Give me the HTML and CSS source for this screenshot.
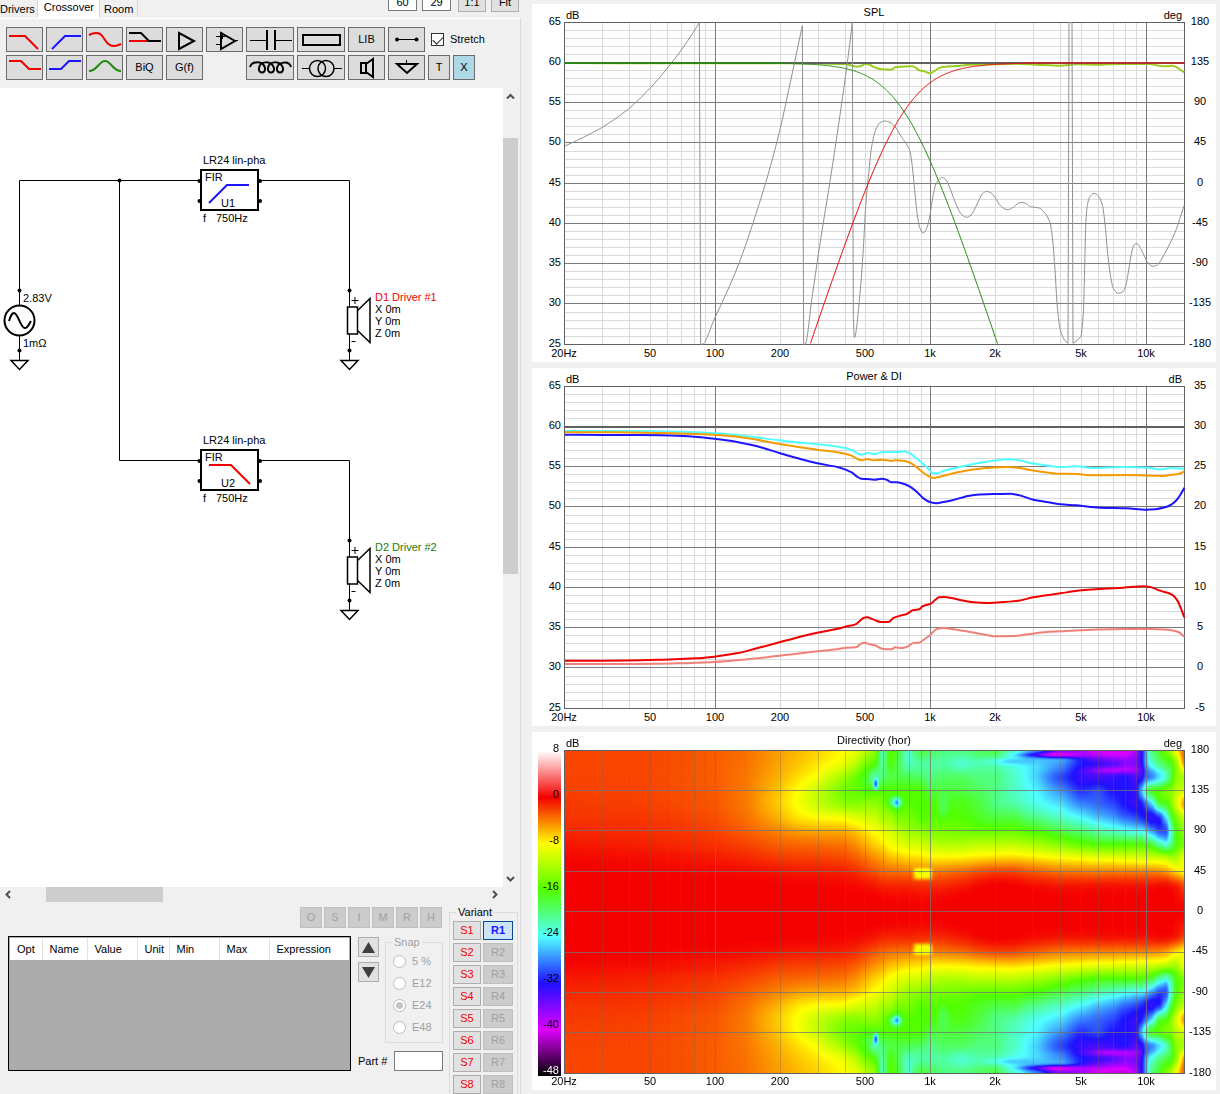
FILE: index.html
```html
<!DOCTYPE html>
<html lang="en">
<head>
<meta charset="utf-8">
<meta name="viewport" content="width=device-width, initial-scale=1">
<title>Crossover</title>
<link rel="stylesheet" href="styles.css">
</head>
<body>
<div class="app">
  <main class="editor">
    <header class="topbar">
      <nav class="tabs">
        <a class="tab" href="#drivers">Drivers</a>
        <a class="tab tab-active" href="#crossover">Crossover</a>
        <a class="tab" href="#room">Room</a>
      </nav>
      <div class="view-tools">
        <input class="view-input" type="text" value="60" aria-label="Grid columns">
        <input class="view-input" type="text" value="29" aria-label="Grid rows">
        <button class="view-button" type="button">1:1</button>
        <button class="view-button" type="button">Fit</button>
      </div>
    </header>

    <div class="page">
      <div class="toolbar">
        <div class="tool-row">
          <button class="tool" type="button" aria-label="Low pass"><svg viewBox="1 1 35 23"><path class="red" d="M3 9H19L32 22"/></svg></button>
          <button class="tool" type="button" aria-label="High pass"><svg viewBox="1 1 35 23"><path class="blue" d="M6 22L19 9H35"/></svg></button>
          <button class="tool" type="button" aria-label="All pass"><svg viewBox="1 1 35 23"><path class="red" d="M3 8C7 6 13 4 17 10C21 16 23 19 28 19C31 19 33 18 35 17"/></svg></button>
          <button class="tool" type="button" aria-label="Shelf"><svg viewBox="1 1 35 23"><path class="red" d="M3 14H22"/><path d="M3 6H15L23 14H35"/></svg></button>
          <button class="tool" type="button" aria-label="Buffer"><svg viewBox="1 1 35 23"><path d="M13 6V22L28 14Z"/></svg></button>
          <button class="tool" type="button" aria-label="Operational amplifier"><svg viewBox="1 1 35 23"><path d="M15 6V22L29 14Z"/><path class="thin" d="M10 9.500H19M16.500 7V12M10 17.500H15M29 13.500H32"/></svg></button>
          <button class="tool tool-wide" type="button" aria-label="Capacitor"><svg viewBox="1 1 46 23"><path class="thin" d="M4 13.500H21M29 13.500H46"/><path d="M21 3V23M29 3V23"/></svg></button>
          <button class="tool tool-wide" type="button" aria-label="Resistor"><svg viewBox="1 1 46 23"><path d="M6 8H43V18H6Z"/></svg></button>
          <button class="tool" type="button">LIB</button>
          <button class="tool" type="button" aria-label="Wire"><svg viewBox="1 1 35 23"><path class="thin" d="M9 12.500H29"/><circle cx="9" cy="12.500" r="2"/><circle cx="28.500" cy="12.500" r="2"/></svg></button>
          <label class="stretch"><input type="checkbox" checked>Stretch</label>
        </div>
        <div class="tool-row">
          <button class="tool" type="button" aria-label="Low shelf"><svg viewBox="1 1 35 23"><path class="red" d="M3 6H15L23 14H35"/></svg></button>
          <button class="tool" type="button" aria-label="High shelf"><svg viewBox="1 1 35 23"><path class="blue" d="M3 14H15L23 6H35"/></svg></button>
          <button class="tool" type="button" aria-label="Peak"><svg viewBox="1 1 35 23"><path class="green" d="M3 16C11 16 13 6 19 6C25 6 27 16 35 16"/></svg></button>
          <button class="tool" type="button">BiQ</button>
          <button class="tool tool-last" type="button">G(f)</button>
          <button class="tool tool-wide" type="button" aria-label="Inductor"><svg viewBox="1 1 46 23"><path d="M4 12C6 6 17 5 19 13C20 19 12 19 13 13C14 6 25 5 28 13C29 19 21 19 22 13C23 6 34 5 37 13C38 19 30 19 31 13C32 7 43 5 45 12"/></svg></button>
          <button class="tool tool-wide" type="button" aria-label="Transformer"><svg viewBox="1 1 46 23"><circle class="ring" cx="20.500" cy="13.500" r="8"/><circle class="ring" cx="29" cy="13.500" r="8"/><path class="thin" d="M5 13.500H13M37 13.500H45"/></svg></button>
          <button class="tool" type="button" aria-label="Driver"><svg viewBox="1 1 35 23"><path d="M13 8H18V18H13ZM18 9L25 4V22L18 17"/></svg></button>
          <button class="tool" type="button" aria-label="Ground"><svg viewBox="1 1 35 23"><path d="M9 9H29L19 18Z"/><path class="thin" d="M18.500 5V9"/></svg></button>
          <button class="tool tool-small" type="button">T</button>
          <button class="tool tool-small tool-x" type="button">X</button>
        </div>
      </div>

      <div class="workspace">
        <svg class="schematic" viewBox="0 88 503 640" role="img" aria-label="Crossover schematic">
          <defs>
            <g id="ground"><path class="part" d="M-8.500 10H8.500L0 19Z"/></g>
            <g id="speaker">
              <path class="wire" d="M0 0V17M0 43V70"/>
              <rect class="part" x="-2" y="16.500" width="10" height="27"/>
              <path class="part" d="M8 20L20.500 8V52L8 40"/>
              <circle class="node" r="2"/><circle class="node" cy="60" r="2"/>
              <path class="wire" d="M2 10H9M5.500 6.500V13.500M2 51H6"/>
              <use href="#ground" y="60"/>
            </g>
            <g id="block">
              <rect class="part" x="1" y="-11" width="57" height="40"/>
              <circle class="node" cx="-.5" r="2"/><circle class="node" cx="-.5" cy="20" r="2"/>
              <circle class="node" cx="60" r="2"/><circle class="node" cx="60" cy="20" r="2"/>
            </g>
          </defs>
          <path class="wire" d="M19.500 290V180.500H200M119.500 180.500V460.500H200M260 180.500H349.500V290M260 460.500H349.500V540M19.500 290V306M19.500 335V360"/>
          <circle class="node" cx="119.500" cy="180.500" r="2"/>
          <circle class="node" cx="19.500" cy="290.500" r="2"/>
          <circle class="node" cx="19.500" cy="350.500" r="2"/>
          <circle class="part" cx="19.500" cy="320.500" r="15"/>
          <path class="part" d="M9 321C11 315 12 313 14 313C18 313 21 329 25 328C28 328 29 324 31 321"/>
          <use href="#ground" x="19.500" y="350.500"/>
          <text x="23" y="302">2.83V</text><text x="23" y="347">1mΩ</text>

          <use href="#block" x="200" y="181"/>
          <path class="part blue" d="M209 203L227 185H249"/>
          <text x="203" y="164">LR24 lin-pha</text><text x="205" y="181">FIR</text><text x="221" y="207">U1</text>
          <text x="203" y="222">f</text><text x="216" y="222">750Hz</text>

          <use href="#block" x="200" y="461"/>
          <path class="part red" d="M209 465H231L250 484"/>
          <text x="203" y="444">LR24 lin-pha</text><text x="205" y="461">FIR</text><text x="221" y="487">U2</text>
          <text x="203" y="502">f</text><text x="216" y="502">750Hz</text>

          <use href="#speaker" x="349.500" y="290.500"/>
          <text class="name-red" x="375" y="301">D1 Driver #1</text>
          <text x="375" y="313">X 0m</text><text x="375" y="325">Y 0m</text><text x="375" y="337">Z 0m</text>
          <use href="#speaker" x="349.500" y="540.500"/>
          <text class="name-green" x="375" y="551">D2 Driver #2</text>
          <text x="375" y="563">X 0m</text><text x="375" y="575">Y 0m</text><text x="375" y="587">Z 0m</text>
        </svg>
        <div class="scroll scroll-v">
          <button type="button" aria-label="Scroll up"><svg viewBox="0 0 9 9"><path d="M1 6.500L4.500 3L8 6.500"/></svg></button>
          <div class="track-v"><div class="thumb"></div></div>
          <button type="button" aria-label="Scroll down"><svg viewBox="0 0 9 9"><path d="M1 3L4.500 6.500L8 3"/></svg></button>
        </div>
      </div>
      <div class="scroll scroll-h">
        <button type="button" aria-label="Scroll left"><svg viewBox="0 0 9 9"><path d="M6 1L2.500 4.500L6 8"/></svg></button>
        <div class="track-h"><div class="thumb"></div></div>
        <button type="button" aria-label="Scroll right"><svg viewBox="0 0 9 9"><path d="M3 1L6.500 4.500L3 8"/></svg></button>
      </div>

      <div class="bottom">
        <section class="params">
          <div class="modes">
            <button type="button" disabled>O</button><button type="button" disabled>S</button><button type="button" disabled>I</button><button type="button" disabled>M</button><button type="button" disabled>R</button><button type="button" disabled>H</button>
          </div>
          <div class="params-row">
            <div class="table-box">
              <table>
                <thead><tr><th class="c-opt">Opt</th><th class="c-name">Name</th><th class="c-num">Value</th><th class="c-opt">Unit</th><th class="c-num">Min</th><th class="c-num">Max</th><th>Expression</th></tr></thead>
              </table>
            </div>
            <div class="side">
              <div class="side-top">
                <div class="moves">
                  <button type="button" aria-label="Move up"><svg viewBox="0 0 13 11"><path d="M6.500 0L13 11H0Z"/></svg></button>
                  <button type="button" aria-label="Move down"><svg viewBox="0 0 13 11"><path d="M0 0H13L6.500 11Z"/></svg></button>
                </div>
                <fieldset class="snap" disabled>
                  <legend>Snap</legend>
                  <label><input type="radio" name="snap">5 %</label>
                  <label><input type="radio" name="snap">E12</label>
                  <label><input type="radio" name="snap" checked>E24</label>
                  <label><input type="radio" name="snap">E48</label>
                </fieldset>
              </div>
              <div class="part-row"><label for="part">Part #</label><input id="part" type="text"></div>
            </div>
          </div>
        </section>
        <fieldset class="variant">
          <legend>Variant</legend>
          <div class="variant-grid">
            <button class="save" type="button">S1</button><button class="recall recall-on" type="button">R1</button>
            <button class="save" type="button">S2</button><button class="recall" type="button" disabled>R2</button>
            <button class="save" type="button">S3</button><button class="recall" type="button" disabled>R3</button>
            <button class="save" type="button">S4</button><button class="recall" type="button" disabled>R4</button>
            <button class="save" type="button">S5</button><button class="recall" type="button" disabled>R5</button>
            <button class="save" type="button">S6</button><button class="recall" type="button" disabled>R6</button>
            <button class="save" type="button">S7</button><button class="recall" type="button" disabled>R7</button>
            <button class="save" type="button">S8</button><button class="recall" type="button" disabled>R8</button>
          </div>
        </fieldset>
      </div>
    </div>
  </main>

  <aside class="charts">
    <svg class="chart" id="spl" viewBox="0 0 684 358" role="img" aria-label="SPL"></svg>
    <svg class="chart" id="power" viewBox="0 0 684 358" role="img" aria-label="Power and DI"></svg>
    <svg class="chart" id="directivity" viewBox="0 0 684 358" role="img" aria-label="Directivity"></svg>
  </aside>
</div>
<script src="charts.js"></script>
</body>
</html>
```

FILE: styles.css
```css
* { box-sizing: border-box; }

body {
  margin: 0;
  background: #f0f0f0;
  color: #000;
  font: 11px/13px "Liberation Sans", Arial, sans-serif;
}

button, input { font: inherit; color: inherit; margin: 0; }
button { display: flex; align-items: center; justify-content: center; padding: 0; }
button svg { display: block; flex: none; }

.app {
  display: grid;
  grid-template-columns: 521px minmax(0, 1fr);
  gap: 11px;
  min-height: 100vh;
  padding-right: 4px;
}

/* editor */
.editor { display: flex; flex-direction: column; }

.topbar { display: flex; justify-content: space-between; height: 18px; }
.tabs { display: flex; }
.tab {
  height: 17px;
  padding: 3px 2px 0 0;
  border-right: 1px solid #d9d9d9;
  color: #000;
  text-decoration: none;
}
.tab + .tab { padding-left: 4px; padding-right: 4px; }
.tabs .tab-active { height: 18px; padding: 1px 5px 0 6px; background: #fff; }

.view-tools { display: flex; gap: 5px; margin: -10px 2px 0 0; }
.view-input { width: 29px; height: 21px; padding: 3px 0 0; border: 1px solid #7a7a7a; background: #fff; text-align: center; }
.view-button { width: 28px; height: 22px; padding-top: 3px; border: 1px solid #adadad; background: #e1e1e1; }
.view-input + .view-button { margin-left: 2px; }

.page {
  flex: 1;
  display: flex;
  flex-direction: column;
  border: solid #d9d9d9;
  border-width: 0 1px 0 0;
  box-shadow: inset 0 1px #fff;
}

.toolbar { display: flex; flex-direction: column; gap: 3px; padding: 9px 6px 8px; }
.tool-row { display: flex; gap: 3px; }
.tool { width: 37px; height: 25px; border: 1px solid #6b6b6b; background: #dcdcdc; }
.tool-wide { width: 48px; }
.tool-small { width: 22px; }
.tool-last { margin-right: 40px; }
.tool-x { background: #add8e6; }
.tool svg { width: 35px; height: 23px; fill: none; stroke: #000; stroke-width: 2; }
.tool-wide svg { width: 46px; }
.tool svg circle { fill: #000; stroke: none; }
.tool svg .ring { fill: none; stroke: #000; stroke-width: 1.500; }
.tool svg .thin { stroke-width: 1; }
.tool svg .red, .schematic .red { stroke: #f00000; }
.tool svg .blue, .schematic .blue { stroke: #1e14ff; }
.tool svg .green { stroke: #1f8a0c; }
.stretch { display: flex; align-items: center; gap: 6px; padding-left: 3px; }

input[type="checkbox"], input[type="radio"] {
  appearance: none;
  width: 13px;
  height: 13px;
  border: 1px solid #333;
  background: #fff;
}
input[type="checkbox"]:checked::before {
  content: "";
  display: block;
  width: 9px;
  height: 5px;
  margin: 2px 0 0 1px;
  border: solid #222;
  border-width: 0 0 1px 1px;
  transform: rotate(-45deg);
}
input[type="radio"] { border-color: #bcbcbc; border-radius: 50%; }
input[type="radio"]:checked { background: radial-gradient(circle, #c4c4c4 3px, #fff 4px); }

.workspace { flex: 1; display: flex; justify-content: space-between; background: #fff; }
.schematic { flex: 0 1 503px; min-width: 0; height: 640px; }
.schematic text { font-size: 11px; }
.wire { fill: none; stroke: #000; stroke-width: 1; }
.part { fill: none; stroke: #000; stroke-width: 2; }
#speaker .part, #ground .part { stroke-width: 1.500; }
.node { fill: #000; }
.schematic .name-red { fill: #f00000; }
.schematic .name-green { fill: #1f7a0c; }

.scroll { display: flex; background: #f0f0f0; }
.scroll button { width: 15px; height: 17px; border: 0; background: none; }
.scroll svg { width: 9px; height: 9px; fill: none; stroke: #505050; stroke-width: 2; }
.scroll-v { flex-direction: column; width: 15px; margin-right: 2px; box-shadow: 2px 0 #f0f0f0; }
.track-v { flex: 1; }
.track-v .thumb { height: 57%; margin-top: 33px; }
.scroll-h { height: 15px; margin-right: 17px; }
.scroll-h button { width: 17px; height: 15px; }
.track-h { flex: 1; }
.track-h .thumb { width: 25%; height: 15px; margin-left: 29px; }
.thumb { background: #cdcdcd; }

/* parameter area */
.bottom { display: flex; padding-right: 2px; }
.params { flex: 1; padding: 5px 6px 0 8px; }
.modes { display: flex; justify-content: flex-end; gap: 2px; padding-right: 1px; }
.modes button { width: 22px; height: 21px; border: 1px solid #bfbfbf; background: #ccc; color: #a0a0a0; }
.params-row { display: flex; gap: 7px; margin-top: 8px; }
.table-box { flex: 1; height: 135px; padding: 1px; border: 1px solid #000; background: #ababab; }
table { width: 100%; border-collapse: collapse; table-layout: fixed; background: #fff; }
th { height: 22px; padding: 0 0 0 7px; border-right: 1px solid #e0e0e0; font-weight: normal; text-align: left; }
th:last-child { border-right: 0; }
.c-opt { width: 32px; }
.c-name { width: 45px; }
.c-num { width: 50px; }

.side { width: 85px; display: flex; flex-direction: column; justify-content: space-between; }
.side-top { display: flex; gap: 6px; }
.moves { display: flex; flex-direction: column; gap: 5px; padding-top: 1px; }
.moves button { width: 21px; height: 20px; border: 1px solid #adadad; background: #e1e1e1; }
.moves svg { width: 13px; height: 11px; fill: #404040; }
fieldset { min-width: 0; margin: 0; border: 1px solid #dcdcdc; }
legend { padding: 0 2px; }
.snap { flex: 1; height: 107px; padding: 6px 6px 0 7px; color: #a0a0a0; }
.snap legend { margin-left: -1px; }
.snap label { display: flex; align-items: center; gap: 6px; height: 13px; margin-bottom: 9px; white-space: nowrap; }
.part-row { display: flex; align-items: center; justify-content: space-between; }
.part-row input { width: 49px; height: 20px; border: 1px solid #7a7a7a; background: #fff; }

.variant { width: 69px; margin-top: 4px; padding: 2px 3px 0; border-bottom: 0; }
.variant legend { margin-left: 3px; }
.variant-grid { display: grid; grid-template-columns: 28px 30px; gap: 3px 2px; }
.variant button { height: 19px; border: 1px solid #adadad; background: #e1e1e1; }
.variant .save { color: #f00000; }
.variant .recall:disabled { border-color: #bfbfbf; background: #ccc; color: #a0a0a0; }
.variant .recall-on { border-color: #0a4a90; background: #cce4f7; color: #1e14ff; font-weight: bold; }

/* charts */
.charts { display: flex; flex-direction: column; gap: 6px; padding-top: 4px; }
.chart { display: block; width: 100%; height: auto; background: #fff; }
.chart text { font-size: 11px; }
.chart canvas { display: block; width: 620px; height: 323px; }
.minor { fill: none; stroke: #dadada; }
.major { fill: none; stroke: #7c7c7c; }
.overlay .minor { stroke: rgba(110, 100, 70, .33); }
.overlay .major { stroke: rgba(115, 115, 115, .75); }
.frame { fill: none; stroke: #606060; }
.ref { fill: none; stroke: #606060; stroke-width: 2; }
.trace { fill: none; stroke-width: 2; stroke-linejoin: round; }
.trace-fine { fill: none; stroke-width: 1; }
.light { fill: #fff; }
```

FILE: charts.js
```js
const NS = 'http://www.w3.org/2000/svg';
const LEFT = 32.5, TOP = 18.5, WIDTH = 620;
const half = v => Math.floor(v) + 0.5;
const freqX = f => LEFT + WIDTH * Math.log(f / 20) / Math.log(750);

function add(parent, tag, attrs, text) {
  const el = document.createElementNS(NS, tag);
  for (const key in attrs) el.setAttribute(key, attrs[key]);
  if (text !== undefined) el.textContent = text;
  parent.append(el);
  return el;
}

function frequencies() {
  const list = [];
  for (const decade of [10, 100, 1000, 10000])
    for (let n = 1; n < 10; n++) {
      const f = n * decade;
      if (f > 20 && f < 15000) list.push(f);
    }
  return list;
}

/* Grid, axis labels and captions shared by the three charts. */
function axes(svg, o) {
  const g = add(svg, 'g', o.overlay ? { class: 'overlay' } : {});
  const bottom = TOP + o.height;
  let minor = '', major = '';
  for (const f of frequencies()) {
    const line = `M${half(freqX(f))} ${TOP}V${bottom}`;
    if (Number.isInteger(Math.log10(f))) major += line; else minor += line;
  }
  const rows = 8 * o.sub;
  for (let i = 1; i < rows; i++) {
    const line = `M${LEFT} ${half(TOP + o.height * i / rows - 0.3)}H${LEFT + WIDTH}`;
    if (i % o.sub) minor += line; else major += line;
  }
  add(g, 'path', { class: 'minor', d: minor });
  add(g, 'path', { class: 'major', d: major });
  add(g, 'rect', { class: 'frame', x: LEFT, y: TOP, width: WIDTH, height: o.height });
  if (!o.overlay) add(g, 'path', { class: 'ref', d: `M${LEFT} 59H${LEFT + WIDTH}` });

  for (let i = 0; i <= 8; i++) {
    const y = Math.round(TOP + o.height * i / 8 + 2);
    if (o.left) add(svg, 'text', { x: 29, y, 'text-anchor': 'end' }, o.left[i]);
    add(svg, 'text', { x: 668, y, 'text-anchor': 'middle' }, o.right[i]);
  }
  const names = { 20: '20Hz', 50: '50', 100: '100', 200: '200', 500: '500', 1000: '1k', 2000: '2k', 5000: '5k', 10000: '10k' };
  for (const f in names)
    add(svg, 'text', { x: Math.floor(freqX(+f)), y: 353, 'text-anchor': 'middle' }, names[f]);
  add(svg, 'text', { x: 342, y: 12, 'text-anchor': 'middle' }, o.title);
  add(svg, 'text', { x: 34, y: 15 }, 'dB');
  add(svg, 'text', { x: 650, y: 15, 'text-anchor': 'end' }, o.unit);
}

/* Samples are stored at three steps per unit; the high band starts at step 1020. */
function samples(low, high, dy) {
  const read = (text, shift) => text.trim().split(/\s+/).map(p => {
    const [x, y] = p.split(',').map(Number);
    return [(x + shift) / 3 - 2, y / 3 - dy];
  });
  return read(low, 0).concat(read(high, 1020));
}

/* Smooth line through the points; phase wraps stay straight with sharp ends. */
function smooth(p) {
  const WRAP = 100, s = [], m = [];
  for (let i = 0; i < p.length - 1; i++) s.push((p[i + 1][1] - p[i][1]) / (p[i + 1][0] - p[i][0] || 0.01));
  for (let i = 0; i < p.length; i++) {
    const a = s[i - 1], b = s[i];
    if (a === undefined || Math.abs(a) > WRAP) m.push(b);
    else if (b === undefined || Math.abs(b) > WRAP) m.push(a);
    else m.push(a * b <= 0 ? 0 : 2 * a * b / (a + b));
  }
  let d = `M${p[0][0]} ${p[0][1]}`;
  for (let i = 0; i < p.length - 1; i++) {
    const [x0, y0] = p[i], [x1, y1] = p[i + 1], h = (x1 - x0) / 3;
    if (Math.abs(s[i]) > WRAP || h === 0) d += `L${x1} ${y1}`;
    else d += `C${x0 + h} ${y0 + h * m[i]} ${x1 - h} ${y1 - h * m[i + 1]} ${x1} ${y1}`;
  }
  return d;
}

function filterPath(highPass) {
  let d = '';
  for (let x = 0; x <= WIDTH; x++) {
    const r4 = (20 * Math.pow(750, x / WIDTH) / 750) ** 4;
    const loss = 20 * Math.log10(highPass ? (1 + r4) / r4 : 1 + r4);
    const y = 59 + loss * 8.05;
    if (y > TOP + 322) continue;
    d += `${d ? 'L' : 'M'}${LEFT + x} ${y.toFixed(2)}`;
  }
  return d;
}

const spl = document.getElementById('spl');
axes(spl, { title: 'SPL', unit: 'deg', height: 322, sub: 5,
  left: [65, 60, 55, 50, 45, 40, 35, 30, 25], right: [180, 135, 90, 45, 0, -45, -90, -135, -180] });
add(spl, 'path', { class: 'trace', stroke: '#9acd1e', d: smooth(samples(
  '105,189 590,190 800,190 900,191 950,193 968,198 980,200 993,198 1005,192',
  '-5,193 16,203 38,208 65,209 75,202 128,199 140,205 147,211 160,213 180,220 195,212 210,203 225,200 260,198 300,194 375,193 430,191 500,194 570,197 620,193 690,194 750,192 840,192 865,197 885,199 905,197 920,202 932,210 943,217', 4)) });
add(spl, 'path', { class: 'ref', d: `M${LEFT} 59H${LEFT + WIDTH}` });
add(spl, 'path', { class: 'trace-fine', stroke: '#909090', d: smooth(samples(
  '105,438 160,412 215,383 295,327 358,267 410,207 454,150 490,97 508,68 512,1033 516,1033 553,957 592,873 627,790 668,672 708,545 748,397 785,228 817,77 821,1033 825,1033 846,893 867,750 905,512 938,290 955,165 967,68 970,950 973,1013 990,880 1000,745 1007,620 1015,530',
  '5,440 17,390 30,368 45,363 60,367 75,380 95,412 110,433 120,455 127,500 135,580 142,645 150,685 160,699 170,685 178,655 187,600 197,555 208,538 217,532 228,540 240,565 255,605 272,640 290,652 303,645 320,615 337,582 350,574 362,578 375,592 392,618 412,629 430,622 445,610 457,607 468,611 482,620 508,624 525,640 540,668 548,720 555,810 562,920 571,990 585,1022 594,1030 597,68 606,68 609,1030 632,1010 640,940 644,800 648,660 653,610 660,590 672,580 685,588 697,615 706,680 713,760 722,830 730,865 745,880 758,876 768,855 776,810 785,757 792,735 799,730 808,738 820,762 835,790 850,799 862,795 880,768 900,730 920,685 933,645 943,615', 4)) });
add(spl, 'path', { class: 'trace', stroke: '#3f7f2c', d: 'M32.500 59H250' });
add(spl, 'path', { class: 'trace-fine', stroke: '#1f8a0c', d: filterPath(false) });
add(spl, 'path', { class: 'trace-fine', stroke: '#f00000', d: filterPath(true) });
add(spl, 'path', { class: 'trace', stroke: '#b03030', d: 'M490 59H652.500' });

const power = document.getElementById('power');
axes(power, { title: 'Power & DI', unit: 'dB', height: 322, sub: 5,
  left: [65, 60, 55, 50, 45, 40, 35, 30, 25], right: [35, 30, 25, 20, 15, 10, 5, 0, -5] });
const powerTraces = [
  ['#50ffff', '105,198 300,198 450,200 560,205 640,212 748,226 800,232 862,238 930,246 965,255 980,264 993,269 1012,264',
    '15,267 35,262 65,261 85,261 100,259 115,263 135,276 155,293 175,311 187,324 200,325 220,318 260,308 310,297 370,287 415,283 445,285 480,294 520,300 570,306 620,304 670,309 760,306 835,308 870,313 905,309 943,311'],
  ['#1e14ff', '105,209 215,210 330,210 460,213 553,221 600,227 655,238 700,249 748,264 800,279 862,295 930,308 965,322 980,334 993,341 1010,342',
    '13,344 35,341 50,344 65,352 78,352 100,356 120,365 140,380 160,400 180,411 198,415 215,412 250,405 285,395 320,389 375,387 420,386 445,390 490,404 530,411 571,418 620,421 690,428 770,430 829,434 855,433 885,427 905,418 920,405 932,388 943,368'],
  ['#f59a00', '105,202 250,202 400,204 500,207 600,213 655,220 748,237 800,245 862,254 930,263 965,272 980,281 995,286 1012,282',
    '10,286 35,284 65,288 75,286 105,288 125,296 145,311 170,330 190,339 210,335 250,325 300,315 350,309 415,306 445,308 480,315 520,321 560,326 620,327 670,331 770,330 850,332 880,333 905,329 925,327 943,319'],
  ['#ee0000', '105,887 215,887 400,884 500,880 553,875 620,865 680,850 748,832 800,818 862,803 920,792 955,783 975,779 990,767 1000,759 1010,757',
    '10,763 32,771 55,771 72,758 95,751 110,747 130,735 148,733 157,724 165,721 183,716 195,705 207,697 222,696 245,699 275,706 310,712 350,714 390,712 445,707 490,697 571,685 635,676 700,671 760,668 820,664 840,666 855,671 870,677 895,684 910,692 922,706 932,728 943,757'],
  ['#f08078', '105,897 300,897 450,895 553,891 640,884 748,872 862,859 920,853 950,848 978,847 990,838 1002,833',
    '0,838 15,841 35,851 65,853 75,847 95,849 110,846 130,834 148,833 160,825 180,811 190,800 202,791 220,789 250,793 300,801 350,810 375,814 430,813 480,807 530,801 590,798 670,794 760,792 840,792 900,795 925,801 943,815']
];
for (const [stroke, low, high] of powerTraces)
  add(power, 'path', { class: 'trace', stroke, d: smooth(samples(low, high, 3)) });

/* Directivity: level in dB for every 15 degrees off axis, one row per frequency position. */
const COLUMNS = [
  [105, 0, 0, 0, 0, -.2, -.7, -1.2, -1.6, -1.8, -2, -2.1, -2.2, -2.2],
  [358, 0, 0, 0, -.1, -.4, -1, -1.4, -1.7, -2, -2.1, -2.2, -2.2, -2.2],
  [553, 0, 0, 0, -.2, -.8, -1.5, -2, -2.4, -2.7, -2.8, -2.9, -2.9, -2.9],
  [650, 0, 0, 0, -.4, -1.2, -2.1, -2.9, -3.5, -3.8, -3.8, -3.7, -3.6, -3.5],
  [748, 0, 0, 0, -.6, -1.8, -3, -4.2, -5.6, -6.4, -6.2, -5.6, -5.2, -5],
  [805, 0, 0, -.1, -.8, -2, -3.2, -5, -7.2, -8.2, -8, -7, -6.2, -5.8],
  [862, 0, 0, -.1, -.8, -2, -3.4, -5.3, -8, -10.5, -10.5, -8.4, -7.2, -6.6],
  [943, 0, 0, -.2, -1, -2.3, -3.7, -5.5, -8.5, -13, -14.5, -12.5, -9, -8],
  [975, 0, 0, -.3, -1.3, -2.8, -4.4, -6.2, -9.5, -13.5, -15, -14.5, -11, -9],
  [1007, 0, 0, -.5, -2, -3.6, -5.5, -7.2, -10, -13, -16, -17, -14, -11],
  [1036, 0, 0, -.8, -2.6, -4.5, -6.5, -8.2, -10.5, -13, -16, -21, -16, -13],
  [1057, 0, -.1, -1.2, -3.2, -5, -7.2, -9, -12, -14, -16, -19.5, -21, -22],
  [1085, 0, -.2, -1.3, -3.5, -6, -8.5, -10, -12.5, -15, -16, -18, -16, -15],
  [1100, 0, -.2, -1.3, -3.6, -6.2, -9, -11, -14, -16, -16, -18, -18, -17],
  [1135, 0, -.2, -1.3, -3.8, -6.8, -9.8, -12.5, -14, -15.5, -16, -18.5, -22, -22.5],
  [1170, 0, -.3, -1.5, -4, -7, -10, -13, -15.5, -16, -16, -19, -21, -18],
  [1201, 0, -.3, -1.5, -4, -7.5, -11, -14, -15.5, -16, -18, -20, -21, -18.5],
  [1240, 0, -.2, -1.4, -3.8, -7.6, -11.5, -14, -15.5, -17, -18, -19, -21, -20],
  [1300, 0, 0, -.9, -3.4, -7.4, -11.5, -14.5, -16, -16.5, -18, -19, -22.5, -20],
  [1350, 0, 0, -.3, -2.6, -7, -11, -15, -17, -18, -19, -20, -21, -19],
  [1396, 0, 0, 0, -2.2, -6.8, -11, -15, -18, -20, -20, -20, -21, -18],
  [1450, 0, 0, -.1, -2.2, -6.6, -11, -15, -18, -21, -22, -22, -23, -22],
  [1510, 0, 0, -.5, -3, -7.2, -11.8, -16, -20, -23, -24, -25, -25, -27],
  [1591, 0, 0, -.8, -3.8, -8, -13.5, -18, -22, -25, -27.5, -30, -28, -36],
  [1654, 0, 0, -.8, -4, -8.5, -15, -19.5, -24, -28, -31, -33, -32, -37],
  [1706, 0, 0, -.7, -4.1, -9, -16, -21, -26, -29, -30, -33.5, -33, -40],
  [1747, 0, 0, -.7, -4.1, -9, -16, -22, -27, -30, -32, -33, -34, -41],
  [1787, 0, 0, -.7, -4.2, -9.5, -16, -23, -29, -32, -32, -32, -35, -41],
  [1819, 0, 0, -.7, -4.2, -9.5, -16, -24, -30, -33, -33, -34, -35, -38],
  [1835, 0, 0, -.8, -4.2, -10, -16, -24, -31, -32, -27, -33, -33, -33],
  [1849, 0, 0, -.8, -4.2, -10, -17, -25, -32, -29, -21, -29, -27, -27],
  [1865, 0, 0, -.7, -4.3, -10, -17.5, -27, -33, -26, -17, -28, -23, -20],
  [1890, 0, 0, -.5, -4.5, -10.5, -21, -30, -31, -18, -16, -25, -20, -17],
  [1910, 0, 0, -.5, -5, -11, -23, -30, -25, -17, -14, -22, -18, -14],
  [1925, 0, 0, -.8, -6, -12, -20, -22, -18, -14, -14, -18, -17, -12],
  [1940, 0, -.3, -1.2, -7, -12, -16, -16, -14, -10, -11, -13, -13, -8],
  [1963, 0, -.8, -2.5, -8, -9, -14, -13, -11, -5, -10, -12, -5, -3]
];
/* Local notches and peaks: position, angle, half widths, level. */
const SPOTS = [
  [1039, 142, 7, 6, -11], [1098, 122, 18, 6, -8], [1104, 121, 8, 5, -4],
  [1740, 158, 70, 4, -5], [1800, 160, 34, 7, -2],
  [1560, 175, 90, 3, -8], [1430, 168, 70, 4, -3], [1600, 170, 60, 4, 3], [1241, 115, 14, 14, -2]
];
/* Rectangular cells where one measurement dips. */
const CELLS = [[1180, 42, 28, 6.500, -5]];
const STOPS = [[255, 255, 255], [245, 0, 0], [255, 255, 0], [80, 255, 0], [80, 255, 255], [30, 16, 255], [224, 0, 255], [0, 0, 0]];

function cubic(a, b, c, d, t) {
  return b + 0.5 * t * (c - a + t * (2 * a - 5 * b + 4 * c - d + t * (3 * (b - c) + d - a)));
}
function columnLevel(col, angle) {
  const pos = Math.min(angle / 15, 11.999), i = Math.floor(pos);
  const at = n => col[1 + Math.min(12, Math.abs(n))];
  return cubic(at(i - 1), at(i), at(i + 1), at(i + 2), pos - i);
}
function colour(level) {
  const pos = Math.max(0, Math.min(6.999, (8 - level) / 8)), i = Math.floor(pos), t = pos - i;
  return STOPS[i].map((v, n) => v + (STOPS[i + 1][n] - v) * t);
}

function heatmap(canvas) {
  const w = canvas.width, h = canvas.height, ctx = canvas.getContext('2d');
  const img = ctx.createImageData(w, h);
  for (let x = 0; x < w; x++) {
    const X = 105 + x * 3;
    let k = 0;
    while (k < COLUMNS.length - 2 && COLUMNS[k + 1][0] <= X) k++;
    const a = COLUMNS[k], b = COLUMNS[k + 1];
    const t = Math.min(1, (X - a[0]) / (b[0] - a[0]));
    const mix = k < 8 ? t : t * t * (3 - 2 * t) * 0.5 + t * 0.5;
    for (let y = 0; y < h; y++) {
      const angle = Math.abs(180 - 360 * y / (h - 1));
      let level = columnLevel(a, angle) * (1 - mix) + columnLevel(b, angle) * mix;
      for (const s of SPOTS) {
        const d = ((X - s[0]) / s[2]) ** 2 + ((angle - s[1]) / s[3]) ** 2;
        if (d < 6) level += s[4] * Math.exp(-d);
      }
      for (const s of CELLS)
        level += s[4] * Math.exp(-(((X - s[0]) / s[2]) ** 6) - ((angle - s[1]) / s[3]) ** 4);
      const c = colour(Math.min(0, level)), p = 4 * (y * w + x);
      img.data[p] = c[0]; img.data[p + 1] = c[1]; img.data[p + 2] = c[2]; img.data[p + 3] = 255;
    }
  }
  ctx.putImageData(img, 0, 0);
}

const dir = document.getElementById('directivity');
const holder = add(dir, 'foreignObject', { x: 32, y: 18, width: 621, height: 324 });
const canvas = document.createElement('canvas');
canvas.width = 620;
canvas.height = 323;
holder.append(canvas);
heatmap(canvas);
axes(dir, { title: 'Directivity (hor)', unit: 'deg', height: 323, sub: 1, overlay: true,
  right: [180, 135, 90, 45, 0, -45, -90, -135, -180] });

const gradient = add(add(dir, 'defs', {}), 'linearGradient', { id: 'scale', x1: 0, y1: 0, x2: 0, y2: 1 });
STOPS.forEach((c, i) => add(gradient, 'stop', { offset: i / 7, 'stop-color': `rgb(${c})` }));
add(dir, 'rect', { x: 6, y: 19, width: 23, height: 325, fill: 'url(#scale)' });
for (let i = 0; i < 8; i++)
  add(dir, 'text', { x: 27, y: 20 + 46 * i, 'text-anchor': 'end', class: i === 7 ? 'light' : '' }, 8 - 8 * i);
```
